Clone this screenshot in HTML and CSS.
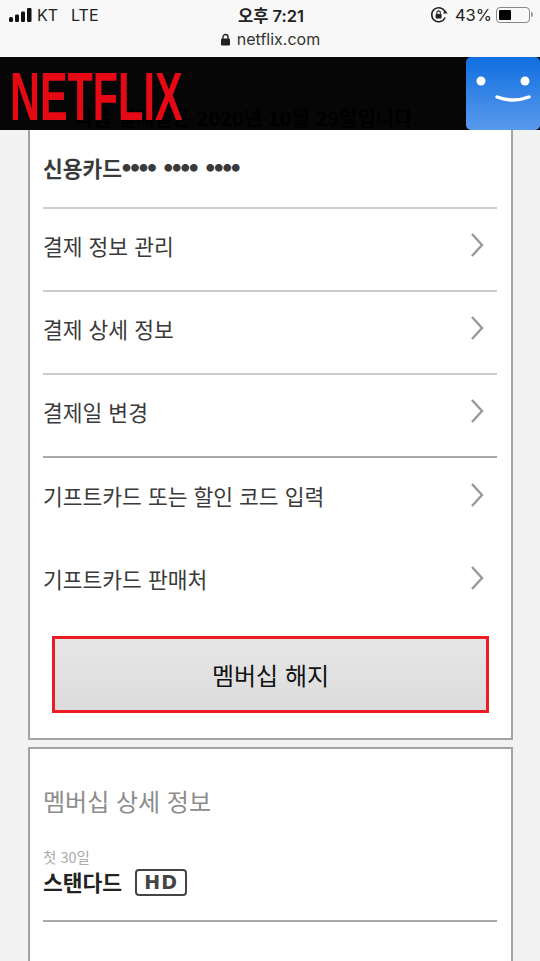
FILE: index.html
```html
<!DOCTYPE html>
<html lang="ko">
<head>
    <meta charset="UTF-8">
    <meta name="viewport" content="width=device-width, initial-scale=1.0">
    <title>Netflix</title>
    <link rel="stylesheet" href="styles.css">
</head>
<body>
    <div class="status">
        <div class="status-top">
            <div class="status-left">
                <svg class="signal" width="26" height="16" viewBox="0 0 26 16">
                    <rect x="0" y="10" width="4" height="5" rx="1.5"/>
                    <rect x="6" y="7.5" width="4" height="7.5" rx="1.2"/>
                    <rect x="12" y="4.5" width="4" height="10.5" rx="1.2"/>
                    <rect x="18" y="1" width="4.5" height="14" rx="1.2"/>
                </svg>
                <span>KT</span>
                <span class="lte">LTE</span>
            </div>
            <div class="status-time">오후 7:21</div>
            <div class="status-right">
                <svg width="18" height="18" viewBox="0 0 18 18" fill="none">
                    <path d="M15.2 11.5A7 7 0 1 1 15.2 6" stroke="#222" stroke-width="1.6"/>
                    <path d="M13 7.5h4.6l-2.2-3z" fill="#222"/>
                    <rect x="5.6" y="8" width="6" height="4.6" rx=".8" fill="#222"/>
                    <path d="M6.9 8V6.6a1.7 1.7 0 0 1 3.4 0V8" stroke="#222" stroke-width="1.1"/>
                </svg>
                <span class="battery-pct">43%</span>
                <div class="battery"><div class="battery-fill"></div></div>
                <div class="battery-tip"></div>
            </div>
        </div>
        <div class="status-url">
            <svg width="11" height="13" viewBox="0 0 11 13">
                <path d="M3 6V4a2.5 2.5 0 0 1 5 0v2" fill="none" stroke="#222" stroke-width="1.4"/>
                <rect x="1" y="5.6" width="9" height="7" rx="1.3" fill="#222"/>
            </svg>
            <span>netflix.com</span>
        </div>
    </div>

    <header class="header">
        <div class="logo">NETFLIX</div>
        <div class="profile">
            <svg width="74" height="73" viewBox="0 0 74 73" fill="none">
                <circle cx="15" cy="24" r="4.5" fill="#fff"/>
                <circle cx="59" cy="24" r="4.5" fill="#fff"/>
                <path d="M31 40Q47 46 63 40" stroke="#fff" stroke-width="3.4" stroke-linecap="round"/>
            </svg>
        </div>
    </header>

    <main class="main">
        <section class="card card-billing">
            <p class="next-date">다음 결제일은 2020년 10월 29일입니다.</p>
            <div class="row row-card">신용카드<span class="dots">●●●● ●●●● ●●●●</span></div>
            <a class="row row-line">결제 정보 관리
                <svg class="chevron" width="14" height="26" viewBox="0 0 14 26"><path d="M2 2l10 11L2 24"/></svg>
            </a>
            <a class="row row-line">결제 상세 정보
                <svg class="chevron" width="14" height="26" viewBox="0 0 14 26"><path d="M2 2l10 11L2 24"/></svg>
            </a>
            <a class="row row-line row-dark">결제일 변경
                <svg class="chevron" width="14" height="26" viewBox="0 0 14 26"><path d="M2 2l10 11L2 24"/></svg>
            </a>
            <a class="row">기프트카드 또는 할인 코드 입력
                <svg class="chevron" width="14" height="26" viewBox="0 0 14 26"><path d="M2 2l10 11L2 24"/></svg>
            </a>
            <a class="row">기프트카드 판매처
                <svg class="chevron" width="14" height="26" viewBox="0 0 14 26"><path d="M2 2l10 11L2 24"/></svg>
            </a>
            <button class="cancel-btn">멤버십 해지</button>
        </section>

        <section class="card card-plan">
            <h2 class="plan-title">멤버십 상세 정보</h2>
            <p class="plan-note">첫 30일</p>
            <div class="plan-name">스탠다드 <span class="hd">HD</span></div>
            <div class="plan-line"></div>
        </section>
    </main>
</body>
</html>
```

FILE: styles.css
```css
body {
    margin: 0;
    height: 961px;
    overflow: hidden;
    position: relative;
    background: #f2f2f2;
    font-family: 'Noto Sans CJK KR', 'Noto Sans', sans-serif;
    color: #333;
}

/* Status bar */
.status {
    height: 57px;
    background: #f8f8f8;
    color: #222;
    font-family: Inter, 'Noto Sans CJK KR', sans-serif;
}

.status-top {
    height: 29px;
    display: grid;
    grid-template-columns: 1fr auto 1fr;
    align-items: center;
    padding: 0 7px 0 9px;
}

.status-left {
    display: flex;
    align-items: center;
    font-size: 16px;
    gap: 4px;
}

.lte {
    margin-left: 9px;
}

.signal {
    fill: #111;
    margin-right: -2px;
}

.status-time {
    font-size: 16.5px;
    font-weight: 600;
}

.status-right {
    display: flex;
    align-items: center;
    justify-content: flex-end;
    font-size: 16.5px;
}

.battery-pct {
    margin: 0 4px 0 7px;
}

.battery {
    border: 1px solid #888;
    border-radius: 4px;
    padding: 2px;
    width: 28px;
    height: 10px;
}

.battery-fill {
    width: 12px;
    height: 100%;
    background: #000;
    border-radius: 1px;
}

.battery-tip {
    width: 2px;
    height: 5px;
    margin-left: 1px;
    background: #999;
    border-radius: 0 2px 2px 0;
}

.status-url {
    display: flex;
    justify-content: center;
    align-items: center;
    gap: 6px;
    font-size: 16px;
    height: 20px;
    color: #333;
}

/* Header lies over the page, page text shows through a little */
.header {
    position: absolute;
    top: 57px;
    left: 0;
    right: 0;
    height: 73px;
    display: flex;
    justify-content: space-between;
    background: rgba(0, 0, 0, 0.975);
    z-index: 10;
}

.logo {
    margin: 0 0 0 10px;
    padding-top: 6px;
    font-family: 'Liberation Sans', sans-serif;
    font-weight: 700;
    font-size: 69px;
    line-height: 67px;
    color: #e50914;
    transform: scaleX(0.6);
    transform-origin: left center;
}

.profile {
    width: 74px;
    height: 73px;
    border-radius: 5px;
    background: linear-gradient(#0f6ee0, #5a9aec);
}

.profile svg {
    display: block;
}

/* Cards */
.main {
    padding: 43px 27px 0 28px;
}

.card {
    background: #fff;
    border: 2px solid #a3a3a3;
    padding: 0 14px 0 13px;
}

.card-billing {
    height: 640px;
    box-sizing: border-box;
    margin-bottom: 7px;
}

.next-date {
    margin: 0;
    height: 23px;
    padding: 4px 0 0 32px;
    box-sizing: border-box;
    font-size: 20px;
    font-weight: 700;
    line-height: 23px;
    color: #000;
    white-space: nowrap;
}

.row {
    height: 83px;
    box-sizing: border-box;
    display: flex;
    justify-content: space-between;
    align-items: center;
    font-size: 21.5px;
    color: #3a3a3a;
    padding: 0 13px 9px 0;
}

.row-card {
    justify-content: flex-start;
    font-weight: 700;
    height: 84px;
    border-bottom: 2px solid #ccc;
    padding: 2px 0 0;
}

.row-line {
    border-bottom: 2px solid #ccc;
}

.row-dark {
    border-bottom-color: #a8a8a8;
}

.dots {
    font-size: 8.5px;
    word-spacing: 6px;
}

.chevron {
    fill: none;
    stroke: #999;
    stroke-width: 2.4;
}

.cancel-btn {
    display: block;
    width: 437px;
    height: 77px;
    margin: 12px 0 0 9px;
    border: 3px solid #ed1c24;
    background: linear-gradient(#e6e6e6, #dcdcdc);
    font-family: inherit;
    font-size: 24px;
    color: #111;
}

.card-plan {
    height: 260px;
    box-sizing: border-box;
}

.plan-title {
    margin: 34px 0 0;
    font-size: 24px;
    font-weight: 400;
    line-height: 36px;
    color: #8c8c8c;
}

.plan-note {
    margin: 28px 0 0;
    font-size: 14.5px;
    line-height: 20px;
    color: #aaa;
}

.plan-name {
    display: flex;
    align-items: center;
    gap: 13px;
    margin-top: 1px;
    font-size: 21.5px;
    font-weight: 700;
    line-height: 28px;
    color: #222;
}

.hd {
    width: 52px;
    height: 27px;
    box-sizing: border-box;
    border: 2px solid #444;
    border-radius: 4px;
    text-align: center;
    font-family: 'DejaVu Sans', sans-serif;
    font-size: 19px;
    font-weight: 700;
    letter-spacing: 1px;
    line-height: 23px;
    color: #444;
}

.plan-line {
    height: 2px;
    margin-top: 24px;
    background: #a8a8a8;
}
```
